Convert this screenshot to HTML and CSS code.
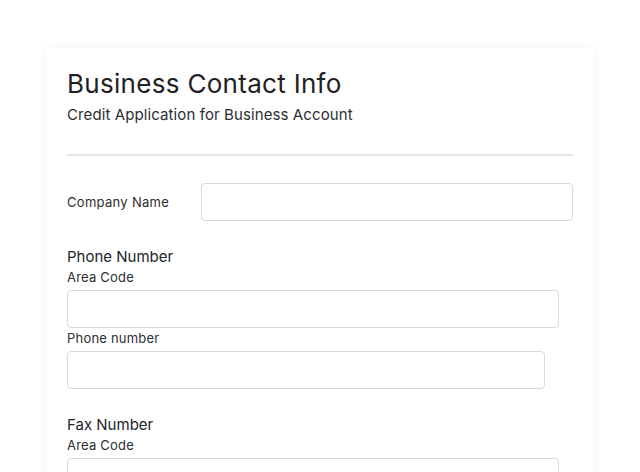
FILE: index.html
```html
<!DOCTYPE html>
<html>
<head>
<meta charset="utf-8">
<link rel="stylesheet" href="styles.css">
</head>
<body>
<div class="page">
  <form class="card">
    <h1 class="title">Business Contact Info</h1>
    <p class="subtitle">Credit Application for Business Account</p>
    <hr class="divider">
    <div class="row">
      <label class="row-label">Company Name</label>
      <input class="input input-full" type="text">
    </div>
    <div class="group">
      <div class="group-title">Phone Number</div>
      <label class="field-label">Area Code</label>
      <input class="input input-area" type="text">
      <label class="field-label">Phone number</label>
      <input class="input input-phone" type="text">
    </div>
    <div class="group">
      <div class="group-title">Fax Number</div>
      <label class="field-label">Area Code</label>
      <input class="input input-area" type="text">
    </div>
  </form>
</div>
</body>
</html>
```
FILE: styles.css
```css
html, body {
  margin: 0;
  padding: 0;
  background: #ffffff;
  font-family: "Inter", "Open Sans", sans-serif;
  color: #222427;
}
.page {
  padding: 48px 0 0 46px;
}
.card {
  width: 506px;
  padding: 20px 21px 40px;
  background: #ffffff;
  box-shadow: 0 0 8px rgba(0, 0, 0, 0.06);
}
.title {
  margin: 0;
  font-size: 26px;
  line-height: 32px;
  font-weight: 400;
  letter-spacing: 0.3px;
  color: #1f2124;
}
.subtitle {
  margin: 5px 0 0;
  font-size: 15px;
  line-height: 20px;
  letter-spacing: 0.1px;
  color: #2c2e31;
}
.divider {
  margin: 29px 0 0;
  border: 0;
  height: 2px;
  background: #e6e6ee;
}
.row {
  display: flex;
  align-items: center;
  margin-top: 27px;
}
.row-label {
  width: 134px;
  flex: none;
  font-size: 13px;
  line-height: 18px;
  letter-spacing: 0.3px;
  color: #2c2e31;
}
.input {
  display: block;
  box-sizing: border-box;
  height: 38px;
  margin: 0;
  border: 1px solid #d9d9dc;
  border-radius: 4px;
  background: #ffffff;
  padding: 0 10px;
  font: inherit;
}
.input-full { width: 372px; }
.input-area { width: 492px; }
.input-phone { width: 478px; }
.group {
  margin-top: 26px;
}
.group-title {
  font-size: 15px;
  line-height: 20px;
  color: #222427;
}
.field-label {
  display: block;
  margin: 1px 0 4px;
  font-size: 13px;
  line-height: 18px;
  letter-spacing: 0.2px;
  color: #2c2e31;
}
```
